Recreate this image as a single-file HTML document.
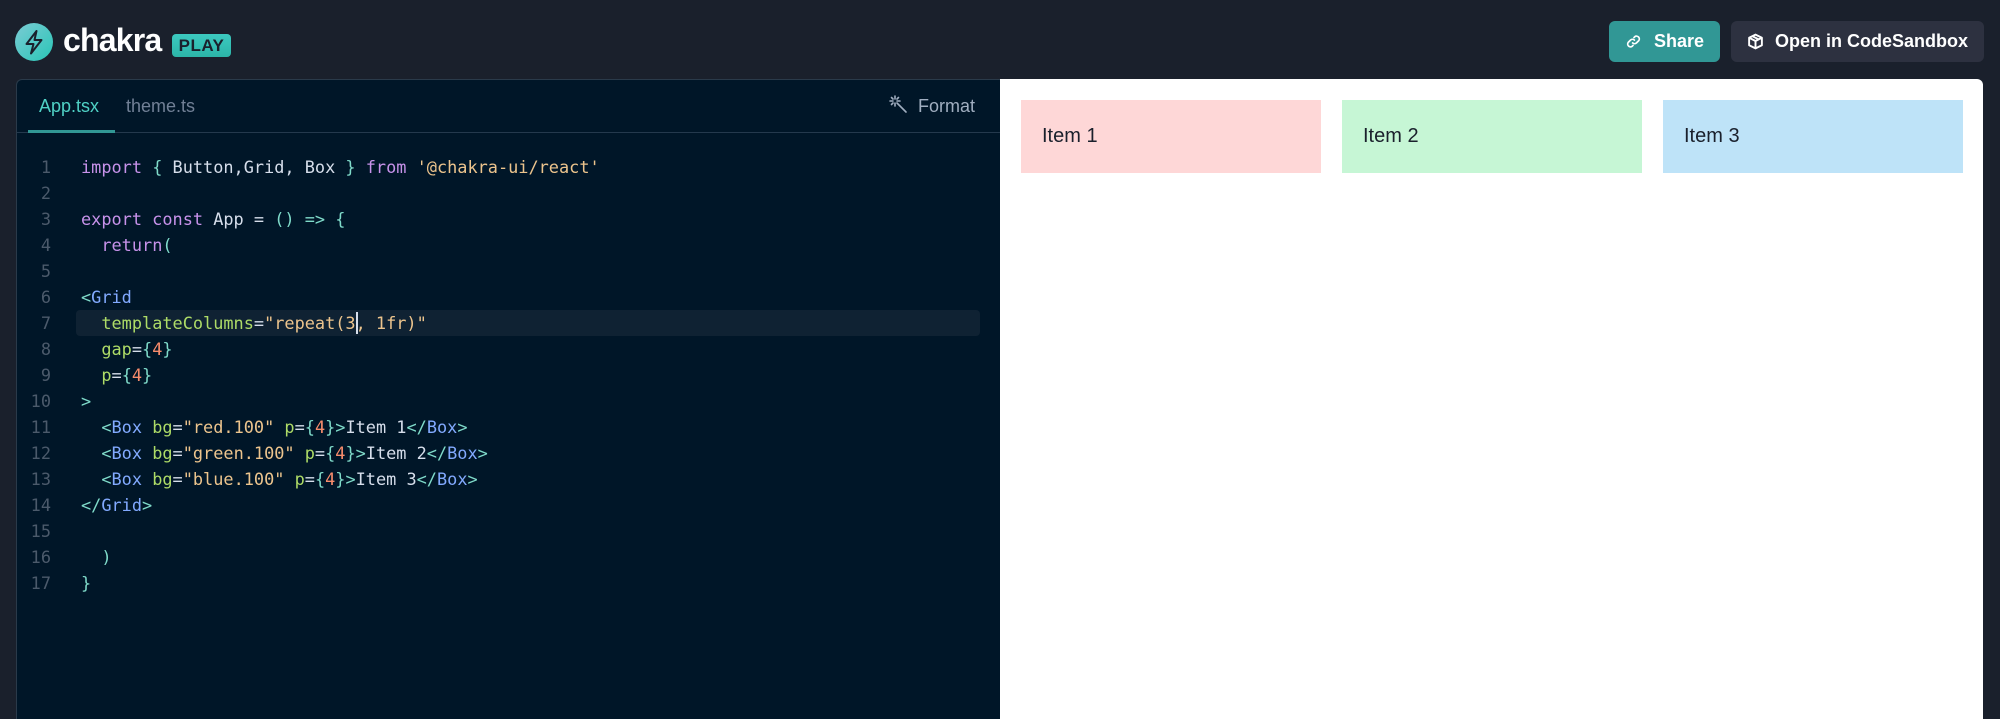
<!DOCTYPE html>
<html><head><meta charset="utf-8"><style>
*{margin:0;padding:0;box-sizing:border-box}
body{width:2000px;height:701px;background:#1a202c;font-family:"Liberation Sans",sans-serif;position:relative;overflow:hidden}
.abs{position:absolute}
.logo{left:15px;top:23px;width:38px;height:38px;border-radius:50%;background:linear-gradient(135deg,#7bcbd4,#29c6b7)}
.chakra{left:63px;top:22px;font-size:32px;font-weight:bold;color:#fff;letter-spacing:-0.8px}
.play{left:172px;top:34px;width:59px;height:23px;border-radius:4px;background:linear-gradient(#3cc9c0,#2cb5a8);color:#1a202c;font-weight:bold;font-size:17px;text-align:center;line-height:23px;letter-spacing:0.5px}
.btn{top:21px;height:41px;border-radius:6px;color:#fff;font-weight:bold;font-size:18px;line-height:41px}
.share{left:1609px;width:111px;background:#319795}
.csb{left:1731px;width:253px;background:#2d3140}
.editor{left:16px;top:79px;width:984px;height:640px;background:#001628;border-top-left-radius:6px;border:1px solid #2a3a4a;border-right:none;border-bottom:none}
.preview{left:1000px;top:79px;width:983px;height:640px;background:#fff;border-top-right-radius:6px}
.tabs{left:0;top:0;width:983px;height:53px;border-bottom:1px solid #24394d}
.code{font-family:"DejaVu Sans Mono","Liberation Mono",monospace;font-size:16.9px;line-height:26px;white-space:pre;color:#d6deeb}
.ln{color:#4b5a6b;text-align:right;width:34px;left:0}
.k{color:#c792ea}.p{color:#7fdbca}.s{color:#ecc48d}.a{color:#addb67}.n{color:#f78c6c}.t{color:#82aaff}
.item{top:21px;height:73px;width:300px;font-size:20px;color:#1a202c;line-height:73px;padding-left:21px}
</style></head><body>
<div class="abs logo"><svg width="38" height="38" viewBox="0 0 38 38"><path d="M21.5 8 L11.5 21 H18.5 L16 30.5 L26.5 17 H19.5 Z" fill="none" stroke="#1a202c" stroke-width="2" stroke-linejoin="round"/></svg></div>
<div class="abs chakra">chakra</div>
<div class="abs play">PLAY</div>
<div class="abs btn share"><svg class="abs" style="left:17px;top:13px" width="15" height="15" viewBox="0 0 16 16" fill="none" stroke="#fff" stroke-width="1.8" stroke-linecap="round"><path d="M7 9.5a3 3 0 0 0 4.2 0l2.4-2.4a3 3 0 0 0-4.2-4.2l-.9.9"/><path d="M9 6.5a3 3 0 0 0-4.2 0L2.4 8.9a3 3 0 0 0 4.2 4.2l.9-.9"/></svg><span class="abs" style="left:45px">Share</span></div>
<div class="abs btn csb"><svg class="abs" style="left:16px;top:12px" width="17" height="17" viewBox="0 0 16 16" fill="none" stroke="#fff" stroke-width="1.8" stroke-linejoin="round"><path d="M8 1.5 14 4.5V11.5L8 14.5 2 11.5V4.5Z M2 4.5 8 7.5 14 4.5 M8 7.5V14.5 M5 3 11 6"/></svg><span class="abs" style="left:44px">Open in CodeSandbox</span></div>
<div class="abs editor">
 <div class="abs tabs">
  <div class="abs" style="left:22px;top:16px;font-size:18px;color:#4fd1c5">App.tsx</div>
  <div class="abs" style="left:11px;top:50px;width:87px;height:3px;background:#319795"></div>
  <div class="abs" style="left:109px;top:16px;font-size:18px;color:#718096">theme.ts</div>
  <svg class="abs" style="left:872px;top:15px" width="20" height="20" viewBox="0 0 20 20" fill="none" stroke="#a0aec0" stroke-width="1.6" stroke-linecap="round"><path d="M8 8 L17 17"/><path d="M6 1v3M6 8v3M1 6h3M8 6h3M2.5 2.5l1.5 1.5M9.5 2.5 8 4M2.5 9.5 4 8"/></svg>
  <div class="abs" style="left:901px;top:16px;font-size:18px;color:#a0aec0">Format</div>
 </div>
 <div class="abs" style="left:59px;top:230px;width:904px;height:26px;background:#0f2233;border-radius:4px"></div>
 <div class="abs" style="left:339px;top:232px;width:2px;height:22px;background:#d6deeb"></div>
 <div class="abs code ln" style="top:74px;left:0;width:34px">1
2
3
4
5
6
7
8
9
10
11
12
13
14
15
16
17</div>
 <div class="abs code" style="left:64px;top:74px"><span class="k">import</span> <span class="p">{</span> Button,Grid, Box <span class="p">}</span> <span class="k">from</span> <span class="s">'@chakra-ui/react'</span>

<span class="k">export const</span> App = <span class="p">()</span> <span class="p">=></span> <span class="p">{</span>
  <span class="k">return</span><span class="p">(</span>

<span class="p">&lt;</span><span class="t">Grid</span>
  <span class="a">templateColumns</span>=<span class="s">"repeat(3, 1fr)"</span>
  <span class="a">gap</span>=<span class="p">{</span><span class="n">4</span><span class="p">}</span>
  <span class="a">p</span>=<span class="p">{</span><span class="n">4</span><span class="p">}</span>
<span class="p">&gt;</span>
  <span class="p">&lt;</span><span class="t">Box</span> <span class="a">bg</span>=<span class="s">"red.100"</span> <span class="a">p</span>=<span class="p">{</span><span class="n">4</span><span class="p">}&gt;</span>Item 1<span class="p">&lt;/</span><span class="t">Box</span><span class="p">&gt;</span>
  <span class="p">&lt;</span><span class="t">Box</span> <span class="a">bg</span>=<span class="s">"green.100"</span> <span class="a">p</span>=<span class="p">{</span><span class="n">4</span><span class="p">}&gt;</span>Item 2<span class="p">&lt;/</span><span class="t">Box</span><span class="p">&gt;</span>
  <span class="p">&lt;</span><span class="t">Box</span> <span class="a">bg</span>=<span class="s">"blue.100"</span> <span class="a">p</span>=<span class="p">{</span><span class="n">4</span><span class="p">}&gt;</span>Item 3<span class="p">&lt;/</span><span class="t">Box</span><span class="p">&gt;</span>
<span class="p">&lt;/</span><span class="t">Grid</span><span class="p">&gt;</span>

  <span class="p">)</span>
<span class="p">}</span></div>
</div>
<div class="abs preview">
 <div class="abs item" style="left:21px;background:#fed7d7">Item 1</div>
 <div class="abs item" style="left:342px;background:#c6f6d5">Item 2</div>
 <div class="abs item" style="left:663px;background:#bee3f8">Item 3</div>
</div>
</body></html>
